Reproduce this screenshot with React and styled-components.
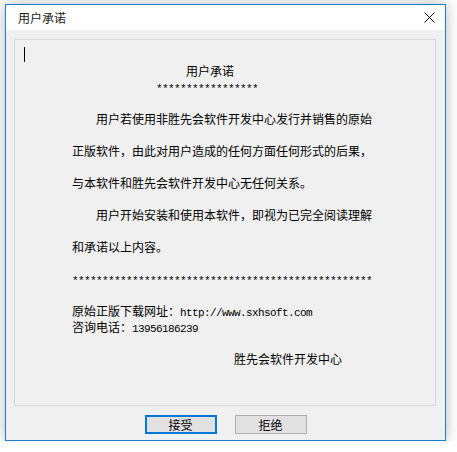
import React from "react";
import styled, { createGlobalStyle } from "styled-components";

const Global = createGlobalStyle`
  html, body { margin: 0; padding: 0; background: #ffffff; }
  body { font-family: "Noto Sans CJK SC", "Noto Sans", sans-serif; }
`;

const Page = styled.div`
  padding: 4px 0 0 5px;
  display: flex;
  align-items: flex-start;
`;

const Window = styled.div`
  width: 439px;
  border: 1px solid #1a7fd4;
  box-shadow: 0 0 14px rgba(0, 0, 0, 0.28);
  background: #f0f0f0;
  display: flex;
  flex-direction: column;
`;

const TitleBar = styled.div`
  height: 25px;
  background: #ffffff;
  display: flex;
  align-items: center;
  justify-content: space-between;
  padding: 0 10px 0 12px;
`;

const Title = styled.span`
  font-family: "Noto Sans CJK SC", sans-serif;
  font-size: 12px;
  color: #1a1a1a;
`;

const Body = styled.div`
  padding: 9px 9px 6px 8px;
  display: flex;
  flex-direction: column;
  gap: 9px;
`;

const TextArea = styled.div`
  height: 367px;
  box-sizing: border-box;
  border: 1px solid #d9d9d9;
  background: #f0f0f0;
  padding: 7px 0 0 0;
  position: relative;
`;

const Caret = styled.div`
  position: absolute;
  left: 9px;
  top: 7px;
  width: 1px;
  height: 15px;
  background: #000;
`;

const Line = styled.div`
  height: 16px;
  line-height: 16px;
  padding-left: ${(p) => 57 + (p.$indent || 0)}px;
  font-family: "Noto Sans CJK SC", sans-serif;
  font-size: 12px;
  color: #000;
  white-space: pre;
`;

const Mono = styled.span`
  font-family: "Liberation Mono", monospace;
  font-size: 11px;
  letter-spacing: -0.6px;
`;

const Buttons = styled.div`
  display: flex;
  justify-content: center;
  gap: 18px;
  padding-left: 1px;
`;

const Button = styled.button`
  width: 72px;
  height: 19px;
  box-sizing: border-box;
  margin: 0;
  padding: 0;
  background: #e1e1e1;
  border: ${(p) => (p.$primary ? "2px solid #0078d7" : "1px solid #adadad")};
  font-family: "Noto Sans CJK SC", sans-serif;
  font-size: 12px;
  line-height: 15px;
  color: #000;
`;

const Close = () => (
  <svg width="11" height="11" viewBox="0 0 11 11">
    <path d="M0.5 0.5 L10.5 10.5 M10.5 0.5 L0.5 10.5" stroke="#111" strokeWidth="1" />
  </svg>
);

export default function App() {
  return (
    <>
      <Global />
      <Page>
        <Window>
          <TitleBar>
            <Title>用户承诺</Title>
            <Close />
          </TitleBar>
          <Body>
            <TextArea>
              <Caret />
              <Line />
              <Line $indent={114}>用户承诺</Line>
              <Line $indent={84}><Mono>*****************</Mono></Line>
              <Line />
              <Line $indent={24}>用户若使用非胜先会软件开发中心发行并销售的原始</Line>
              <Line />
              <Line>正版软件，由此对用户造成的任何方面任何形式的后果，</Line>
              <Line />
              <Line>与本软件和胜先会软件开发中心无任何关系。</Line>
              <Line />
              <Line $indent={24}>用户开始安装和使用本软件，即视为已完全阅读理解</Line>
              <Line />
              <Line>和承诺以上内容。</Line>
              <Line />
              <Line><Mono>**************************************************</Mono></Line>
              <Line />
              <Line>原始正版下载网址：<Mono>http://www.sxhsoft.com</Mono></Line>
              <Line>咨询电话：<Mono>13956186239</Mono></Line>
              <Line />
              <Line $indent={162}>胜先会软件开发中心</Line>
            </TextArea>
            <Buttons>
              <Button $primary>接受</Button>
              <Button>拒绝</Button>
            </Buttons>
          </Body>
        </Window>
      </Page>
    </>
  );
}
